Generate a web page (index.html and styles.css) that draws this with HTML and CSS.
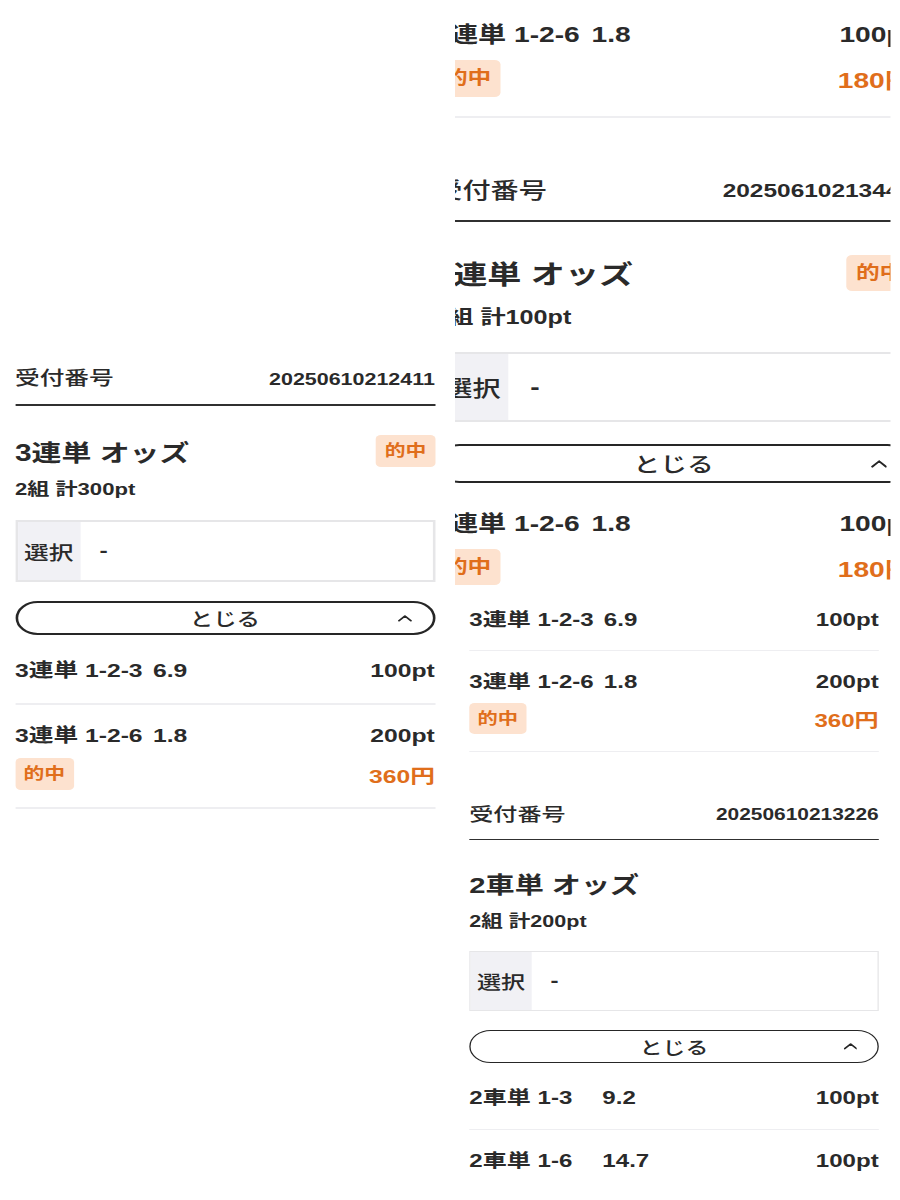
FILE: index.html
```html
<!DOCTYPE html>
<html lang="ja">

<head>
    <meta charset="UTF-8">
    <meta name="viewport" content="width=device-width, initial-scale=1.0">
    <title>購入履歴</title>
    <link rel="stylesheet" href="styles.css">
</head>

<body>
    <div class="sheet">
        <!-- left capture -->
        <div class="col col-left">
            <section class="ticket">
                <div class="ticket-head">
                    <span class="ticket-label">受付番号</span>
                    <span class="ticket-no">20250610212411</span>
                </div>
                <div class="ticket-title">
                    <h2>3連単 オッズ</h2>
                    <span class="badge">的中</span>
                </div>
                <p class="ticket-sum">2組 計300pt</p>
                <div class="pick">
                    <span class="pick-label">選択</span>
                    <span class="pick-value">-</span>
                </div>
                <button class="toggle">
                    <span></span>
                    <span class="toggle-text">とじる</span>
                    <svg class="chevron" viewBox="0 0 12 8" width="11" height="8"><polyline points="1,7 6,1.8 11,7" /></svg>
                </button>
                <ul class="bets">
                    <li class="bet">
                        <div class="bet-line"><span><span class="bet-name">3連単 1-2-3</span>6.9</span><span>100pt</span></div>
                    </li>
                    <li class="bet">
                        <div class="bet-line"><span><span class="bet-name">3連単 1-2-6</span>1.8</span><span>200pt</span></div>
                        <div class="bet-result"><span class="badge">的中</span><span class="payout">360円</span></div>
                    </li>
                </ul>
            </section>
        </div>

        <!-- right captures -->
        <div class="col col-right">
            <div class="shot shot-a">
                <div class="shot-inner">
                    <ul class="bets bets-tail">
                        <li class="bet">
                            <div class="bet-line"><span><span class="bet-name">3連単 1-2-6</span>1.8</span><span>100pt</span></div>
                            <div class="bet-result"><span class="badge">的中</span><span class="payout">180円</span></div>
                        </li>
                    </ul>
                    <section class="ticket">
                        <div class="ticket-head">
                            <span class="ticket-label">受付番号</span>
                            <span class="ticket-no">20250610213441</span>
                        </div>
                        <div class="ticket-title">
                            <h2>3連単 オッズ</h2>
                            <span class="badge">的中</span>
                        </div>
                        <p class="ticket-sum">1組 計100pt</p>
                        <div class="pick">
                            <span class="pick-label">選択</span>
                            <span class="pick-value">-</span>
                        </div>
                        <button class="toggle">
                            <span></span>
                            <span class="toggle-text">とじる</span>
                            <svg class="chevron" viewBox="0 0 12 8" width="11" height="8"><polyline points="1,7 6,1.8 11,7" /></svg>
                        </button>
                        <ul class="bets">
                            <li class="bet">
                                <div class="bet-line"><span><span class="bet-name">3連単 1-2-6</span>1.8</span><span>100pt</span></div>
                                <div class="bet-result"><span class="badge">的中</span><span class="payout">180円</span></div>
                            </li>
                        </ul>
                    </section>
                </div>
            </div>

            <div class="shot shot-c">
                <div class="shot-inner">
                    <ul class="bets bets-tail">
                        <li class="bet">
                            <div class="bet-line"><span><span class="bet-name">3連単 1-2-3</span>6.9</span><span>100pt</span></div>
                        </li>
                        <li class="bet">
                            <div class="bet-line"><span><span class="bet-name">3連単 1-2-6</span>1.8</span><span>200pt</span></div>
                            <div class="bet-result"><span class="badge">的中</span><span class="payout">360円</span></div>
                        </li>
                    </ul>
                    <section class="ticket">
                        <div class="ticket-head">
                            <span class="ticket-label">受付番号</span>
                            <span class="ticket-no">20250610213226</span>
                        </div>
                        <div class="ticket-title">
                            <h2>2車単 オッズ</h2>
                        </div>
                        <p class="ticket-sum">2組 計200pt</p>
                        <div class="pick">
                            <span class="pick-label">選択</span>
                            <span class="pick-value">-</span>
                        </div>
                        <button class="toggle">
                            <span></span>
                            <span class="toggle-text">とじる</span>
                            <svg class="chevron" viewBox="0 0 12 8" width="11" height="8"><polyline points="1,7 6,1.8 11,7" /></svg>
                        </button>
                        <ul class="bets">
                            <li class="bet">
                                <div class="bet-line"><span><span class="bet-name">2車単 1-3</span>9.2</span><span>100pt</span></div>
                            </li>
                            <li class="bet bet-open">
                                <div class="bet-line"><span><span class="bet-name">2車単 1-6</span>14.7</span><span>100pt</span></div>
                            </li>
                        </ul>
                    </section>
                </div>
            </div>
        </div>
    </div>
</body>

</html>
```

FILE: styles.css
```css
html,
body {
    margin: 0;
    overflow: hidden;
    background: #fff;
}

body {
    font-family: "Liberation Sans", "Noto Sans CJK JP", sans-serif;
    color: #2a2a2a;
}

/* the captures are stretched sideways */
.sheet {
    width: 692px;
    height: 1200px;
    display: flex;
    transform: scaleX(1.3);
    transform-origin: 0 0;
}

.col {
    width: 346px;
}

.col-left {
    padding: 364px 0 0 11.5px;
    box-sizing: border-box;
}

.col-left .ticket {
    width: 323px;
}

.shot-a {
    width: 335px;
    height: 589px;
    margin-left: 4px;
    overflow: hidden;
}

.shot-a .shot-inner {
    zoom: 1.14;
    width: 323px;
    margin-left: -14px;
}

.shot-c {
    padding-left: 15px;
}

.shot-c .shot-inner {
    zoom: 0.975;
    width: 323px;
}

.bets-tail + .ticket {
    margin-top: 49px;
}

/* ticket */
.ticket-head {
    display: flex;
    justify-content: space-between;
    align-items: center;
    line-height: 30px;
    padding-bottom: 10px;
    border-bottom: 2px solid #303030;
}

.ticket-label {
    font-size: 19px;
    font-weight: 500;
}

.ticket-no {
    font-size: 16.5px;
    font-weight: 700;
}

.ticket-title {
    display: flex;
    justify-content: space-between;
    align-items: center;
    height: 36px;
    margin-top: 27px;
}

.ticket-title h2 {
    margin: 0;
    font-size: 23px;
    font-weight: 700;
}

.ticket-sum {
    margin: 8px 0 0;
    line-height: 26px;
    font-size: 17px;
    font-weight: 700;
}

.badge {
    display: inline-block;
    height: 32px;
    line-height: 32px;
    padding: 0 6.5px;
    border-radius: 4px;
    background: #fde2cf;
    color: #e06e1b;
    font-size: 16px;
    font-weight: 700;
}

.pick {
    display: flex;
    height: 62px;
    margin-top: 17px;
    border: 2px solid #e6e6e8;
    box-sizing: border-box;
}

.pick-label {
    width: 48px;
    display: flex;
    align-items: center;
    justify-content: center;
    background: #f1f1f5;
    font-size: 19px;
    font-weight: 500;
}

.pick-value {
    display: flex;
    align-items: center;
    padding-left: 15px;
    font-size: 19px;
    font-weight: 700;
}

.toggle {
    display: grid;
    grid-template-columns: 1fr auto 1fr;
    align-items: center;
    width: 100%;
    height: 34px;
    margin-top: 19px;
    padding: 0 16px;
    border: 2px solid #262626;
    border-radius: 17px;
    background: #fff;
    font-family: inherit;
    font-size: 18px;
    font-weight: 500;
    color: #2a2a2a;
}

.chevron {
    justify-self: end;
}

.chevron polyline {
    fill: none;
    stroke: #262626;
    stroke-width: 1.7;
    stroke-linecap: round;
    stroke-linejoin: round;
}

/* bet rows */
.bets {
    list-style: none;
    margin: 5px 0 0;
    padding: 0;
}

.bets-tail {
    margin-top: 0;
}

.bet {
    padding: 16px 0 17px;
    border-bottom: 2px solid #eeeef1;
}

.bet-open {
    border-bottom-color: transparent;
}

.bet-line {
    display: flex;
    justify-content: space-between;
    line-height: 30px;
    font-size: 19px;
    font-weight: 700;
}

.bet-name {
    display: inline-block;
    min-width: 97px;
    margin-right: 8px;
}

.bet-result {
    display: flex;
    justify-content: space-between;
    align-items: center;
    margin-top: 7px;
}

.payout {
    color: #e06e1b;
    font-size: 19px;
    font-weight: 700;
}
```
